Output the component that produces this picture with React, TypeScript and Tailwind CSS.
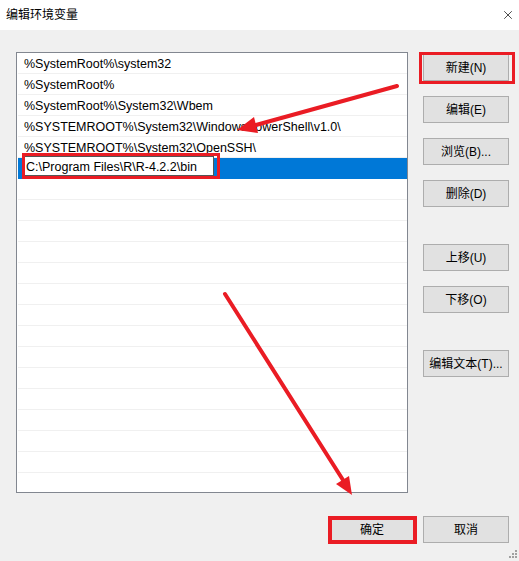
import { X } from "lucide-react";

const paths = [
  "%SystemRoot%\\system32",
  "%SystemRoot%",
  "%SystemRoot%\\System32\\Wbem",
  "%SYSTEMROOT%\\System32\\WindowsPowerShell\\v1.0\\",
  "%SYSTEMROOT%\\System32\\OpenSSH\\",
];

const font = { fontFamily: '"Liberation Sans", "Noto Sans CJK SC", sans-serif' };

const Btn = ({ label, className = "" }: { label: string; className?: string }) => (
  <button className={`w-[86px] h-[27px] bg-[#e1e1e1] border border-[#adadad] text-[12px] text-black leading-none ${className}`}>
    {label}
  </button>
);

export default function App() {
  const rows = Array.from({ length: 21 }, (_, i) => i);

  return (
    <div className="relative w-[519px] h-[561px] bg-[#f0f0f0] overflow-hidden" style={font}>
      {/* title bar */}
      <div className="h-[30px] bg-white flex items-center justify-between pl-[6px] pr-[3px]">
        <span className="text-[12px] text-black">编辑环境变量</span>
        <X size={14} strokeWidth={1.2} className="text-black mr-[1px]" />
      </div>

      <div className="flex pl-[16px] pt-[22px] gap-[15px]">
        {/* list */}
        <div className="w-[392px] h-[441px] bg-white border border-[#828790] overflow-hidden">
          {rows.map((i) => {
            const text = paths[i];
            const selected = i === 5;
            return (
              <div
                key={i}
                className={`h-[21px] border-b ml-[1px] flex items-center relative ${
                  selected ? "bg-[#0078d7] border-[#0078d7]" : "border-[#f0f0f0]"
                }`}
              >
                {text && <span className="pl-[6px] pt-[2px] text-[12.5px] text-black whitespace-nowrap">{text}</span>}
                {selected && (
                  <div className="absolute left-[5px] top-[-2px] w-[191px] h-[20px] bg-white border border-[#555] flex items-center">
                    <span className="pl-[2px] pt-[2px] text-[12.5px] text-black whitespace-nowrap">C:\Program Files\R\R-4.2.2\bin</span>
                  </div>
                )}
              </div>
            );
          })}
        </div>

        {/* side buttons */}
        <div className="flex flex-col pt-[2px]">
          <Btn label="新建(N)" />
          <Btn label="编辑(E)" className="mt-[15px]" />
          <Btn label="浏览(B)..." className="mt-[15px]" />
          <Btn label="删除(D)" className="mt-[15px]" />
          <Btn label="上移(U)" className="mt-[37px]" />
          <Btn label="下移(O)" className="mt-[15px]" />
          <Btn label="编辑文本(T)..." className="mt-[37px]" />
        </div>
      </div>

      {/* bottom buttons */}
      <div className="flex justify-end gap-[8px] pr-[10px] mt-[23px]">
        <Btn label="确定" className="border-[#0078d7]" />
        <Btn label="取消" />
      </div>

      {/* annotations */}
      <svg className="absolute inset-0 pointer-events-none" width="519" height="561">
        <g fill="none" stroke="#ea1c24">
          <rect x="420.5" y="53.5" width="93" height="29" strokeWidth="3" />
          <rect x="23.5" y="154.5" width="195" height="23" strokeWidth="3" />
          <rect x="330" y="518" width="85" height="24" strokeWidth="4" />
        </g>
        <g stroke="#ea1c24" strokeWidth="4" strokeLinecap="round" fill="#ea1c24">
          <line x1="397" y1="86" x2="256" y2="125" />
          <line x1="225" y1="294" x2="343" y2="480" />
        </g>
        <g fill="#ea1c24">
          <polygon points="237,130 254,117 258,133" />
          <polygon points="352,495 336,484 349,476" />
        </g>
        <g fill="#a0a0a0">
          <rect x="515" y="550" width="2" height="2" />
          <rect x="512" y="553" width="2" height="2" />
          <rect x="515" y="553" width="2" height="2" />
          <rect x="509" y="556" width="2" height="2" />
          <rect x="512" y="556" width="2" height="2" />
          <rect x="515" y="556" width="2" height="2" />
        </g>
      </svg>
    </div>
  );
}
